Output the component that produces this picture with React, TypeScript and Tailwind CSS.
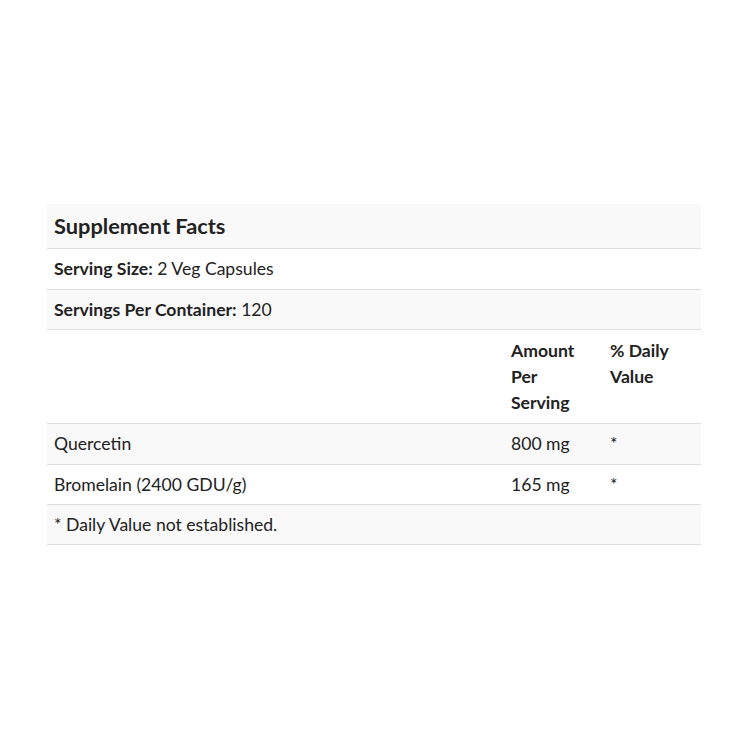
import React from "react";

export default function App() {
  const font = { fontFamily: "Lato, 'Open Sans', sans-serif" };
  return (
    <div className="w-[750px] h-[750px] bg-white text-[#222]" style={font}>
      <div className="pt-[204px] pl-[47px] w-[701px]">
        <div className="w-[654px] border-b border-[#dedede]">
          <div className="bg-[#f9f9f9] px-[7px] pt-[8px] pb-[8px] text-[21.8px] leading-[28px] font-bold">Supplement Facts</div>
          <div className="border-t border-[#dedede] px-[7px] py-[8px] text-[17.6px] leading-[24px]">
            <span className="font-bold">Serving Size:</span> 2 Veg Capsules
          </div>
          <div className="border-t border-[#dedede] bg-[#f9f9f9] px-[7px] pt-[8px] pb-[7px] text-[17.6px] leading-[24px]">
            <span className="font-bold">Servings Per Container:</span> 120
          </div>
          <div className="border-t border-[#dedede] flex text-[17.6px] leading-[26px] font-bold">
            <div className="w-[457px] px-[7px] pt-[8px] pb-[7px]"></div>
            <div className="w-[99px] px-[7px] pt-[8px] pb-[7px]">Amount Per Serving</div>
            <div className="w-[98px] px-[7px] pt-[8px] pb-[7px]">% Daily Value</div>
          </div>
          <div className="border-t border-[#dedede] bg-[#f9f9f9] flex text-[17.6px] leading-[24px]">
            <div className="w-[457px] px-[7px] pt-[8px] pb-[8px]">Quercetin</div>
            <div className="w-[99px] px-[7px] pt-[8px] pb-[8px]">800 mg</div>
            <div className="w-[98px] px-[7px] pt-[8px] pb-[8px]">*</div>
          </div>
          <div className="border-t border-[#dedede] flex text-[17.6px] leading-[24px]">
            <div className="w-[457px] px-[7px] pt-[8px] pb-[7px]">Bromelain (2400 GDU/g)</div>
            <div className="w-[99px] px-[7px] pt-[8px] pb-[7px]">165 mg</div>
            <div className="w-[98px] px-[7px] pt-[8px] pb-[7px]">*</div>
          </div>
          <div className="border-t border-[#dedede] bg-[#f9f9f9] px-[7px] pt-[8px] pb-[7px] text-[17.6px] leading-[24px]">
            * Daily Value not established.
          </div>
        </div>
      </div>
    </div>
  );
}
